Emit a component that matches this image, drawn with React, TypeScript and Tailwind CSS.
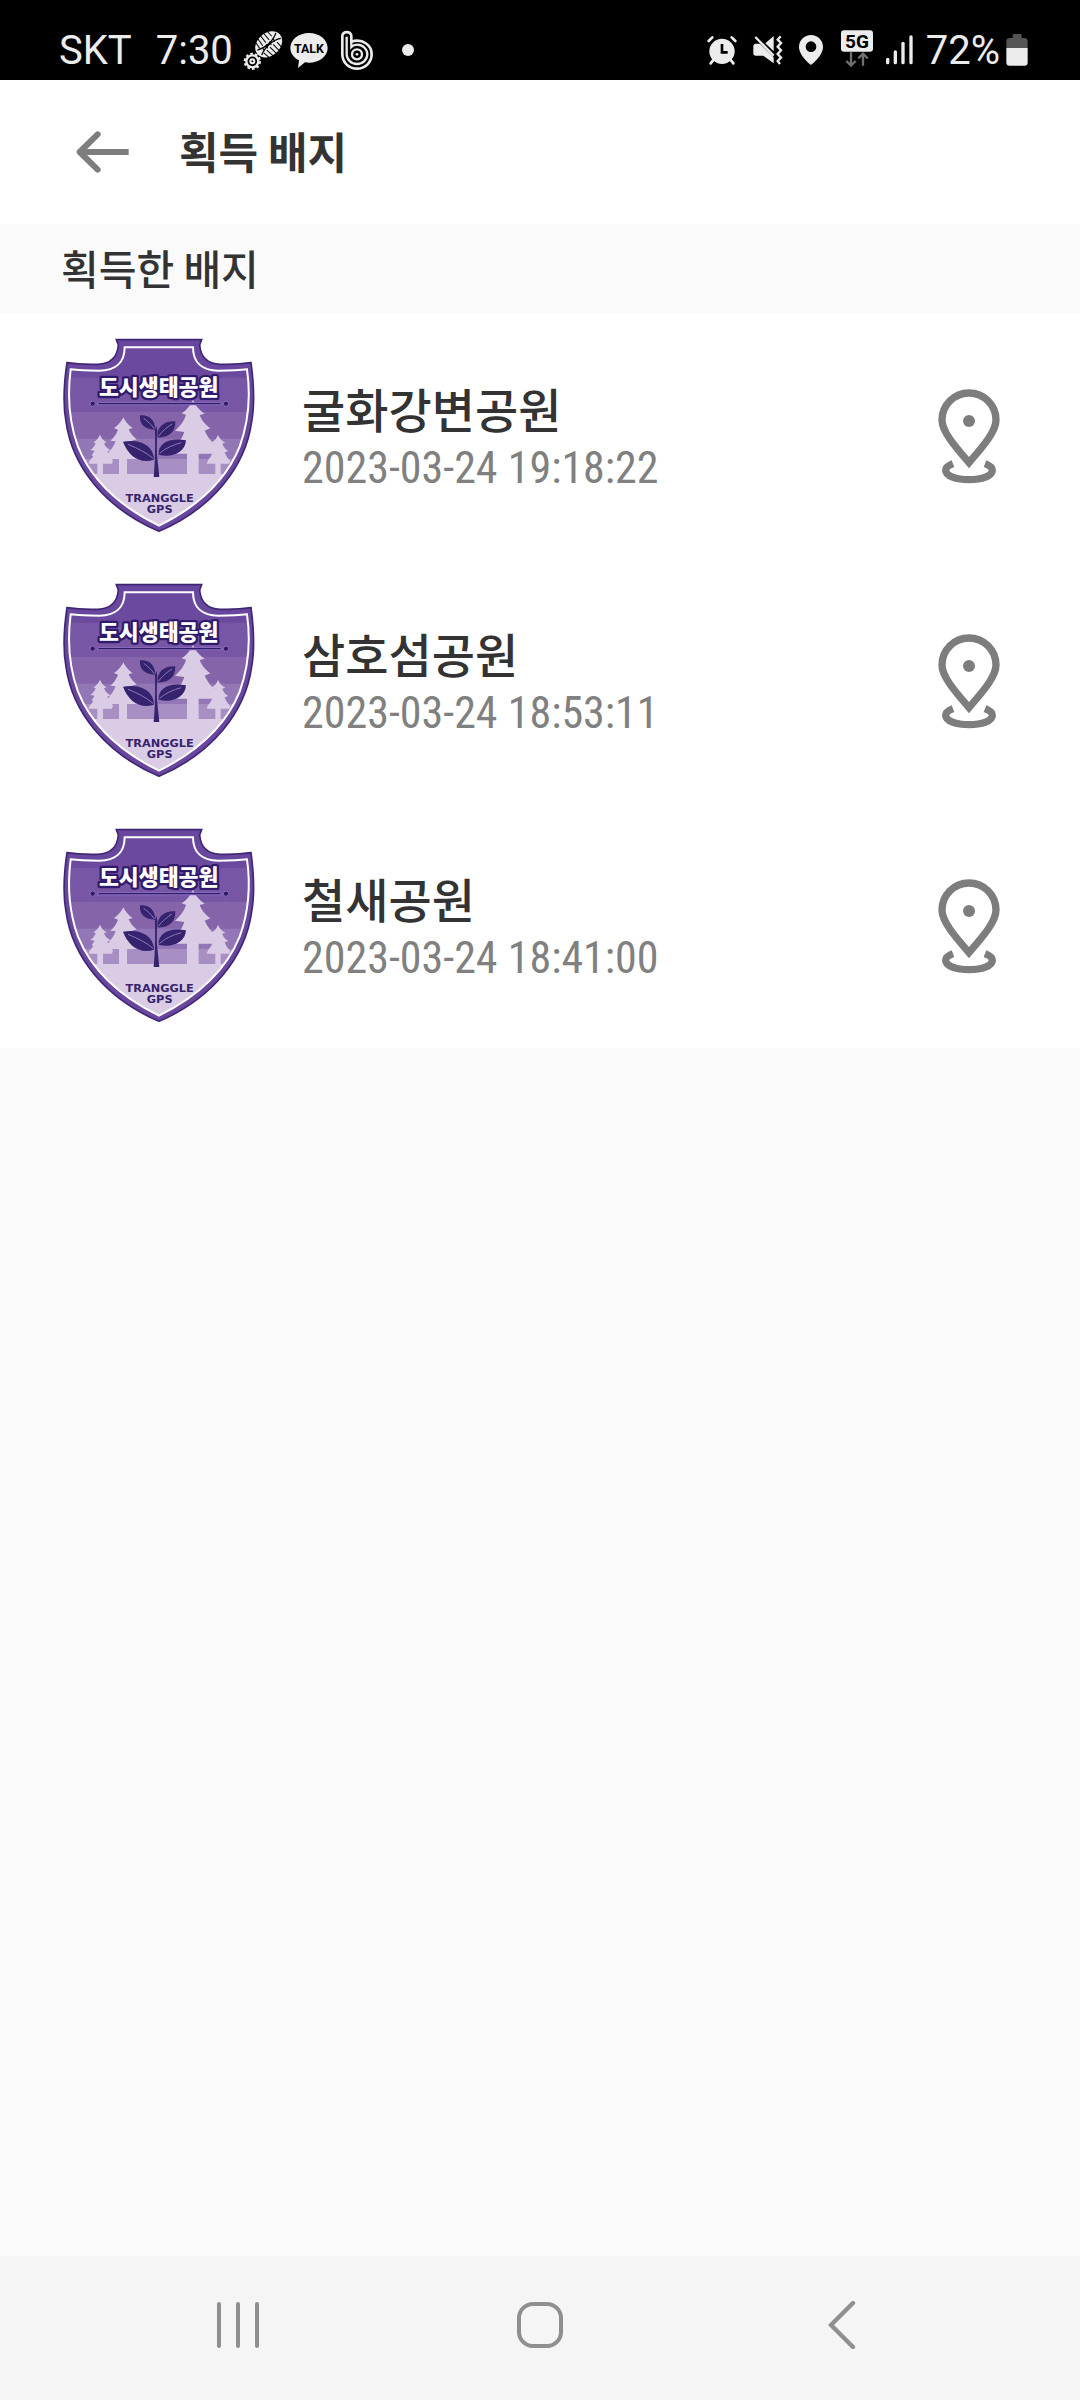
const badges = [
  { name: "굴화강변공원", date: "2023-03-24 19:18:22" },
  { name: "삼호섬공원", date: "2023-03-24 18:53:11" },
  { name: "철새공원", date: "2023-03-24 18:41:00" },
];

function StatusBar() {
  return (
    <div className="flex h-20 items-center justify-between bg-black pt-5 pr-[52px] pl-[59px] font-['Roboto',sans-serif] text-[40px] leading-none text-[#ececec]">
      <div className="flex items-center">
        <span className="pt-[2px]">SKT</span>
        <span className="ml-6 pt-[2px]">7:30</span>

        {/* shoe print + gear */}
        <svg className="ml-[10px] h-10 w-10" viewBox="0 0 120 120" fill="none">
          <g transform="rotate(-42 77 43)">
            <ellipse cx="77" cy="43" rx="45" ry="34" fill="#ececec" />
            <path d="M40 33c22 12 54 12 76-1M40 53c22-12 54-12 76 1" stroke="#000" strokeWidth="4" />
            <path d="M52 12l-3 22M64 8l-3 26M76 6l-2 28M88 8l-1 26M100 11l0 20M52 74l-3-22M64 78l-3-26M76 80l-2-28M88 78l-1-26M100 75l0-20" stroke="#000" strokeWidth="3" />
            <path d="M58 37l-5 12M72 38l-5 12M86 38l-5 12M100 37l-5 12" stroke="#000" strokeWidth="3" />
          </g>
          <circle cx="28" cy="94" r="18" stroke="#ececec" strokeWidth="7" />
          <circle cx="28" cy="94" r="23" stroke="#ececec" strokeWidth="6" strokeDasharray="8 6.5" />
          <circle cx="28" cy="94" r="6" stroke="#ececec" strokeWidth="6" />
        </svg>

        <svg className="ml-[7px] h-10 w-[38px]" viewBox="0 0 114 120">
          <path d="M57 9c31 0 56 20 56 45S88 98 57 98c-4 0-8 0-12-1L24 114l3-23C11 83 1 69 1 54 1 29 26 9 57 9z" fill="#ececec" />
          <text x="57" y="69" textAnchor="middle" fontSize="37" fontWeight="700" fill="#000">
            TALK
          </text>
        </svg>

        <svg className="ml-3 h-10 w-[34px]" viewBox="0 0 102 120" fill="none" stroke="#ececec" strokeWidth="8">
          <path d="M7 73V19C7 2 34 2 34 19v16c34-11 61 11 61 38 0 25-20 43-44 43S7 98 7 73z" />
          <path d="M20 20V73a31 29 0 1 0 31-29c-7 0-13 3-17 7V34" strokeWidth="7" />
          <circle cx="51" cy="73" r="15" strokeWidth="7" />
          <circle cx="51" cy="73" r="4" fill="#ececec" stroke="none" />
        </svg>

        <span className="ml-7 size-3 rounded-full bg-[#ececec]" />
      </div>

      <div className="flex items-center">
        {/* alarm */}
        <svg className="h-[30px] w-[30px]" viewBox="0 0 90 90" fill="none" stroke="#ececec" strokeLinecap="round">
          <circle cx="45" cy="49" r="38" fill="#ececec" stroke="none" />
          <path d="M5 18 16 7M85 18 74 7M18 76l-7 9M72 76l7 9" strokeWidth="8" />
          <path d="M45 27v25h17" stroke="#000" strokeWidth="8" strokeLinecap="butt" />
        </svg>
        {/* vibrate */}
        <svg className="ml-4 h-[30px] w-[30px]" viewBox="0 0 90 90">
          <path d="M8 26h13l41 41v18L31 62H8c-4 0-7-3-7-7V33c0-4 3-7 7-7z" fill="#ececec" />
          <path d="M37 25 62 3v46z" fill="#ececec" />
          <path d="M7 6 62 62" stroke="#ececec" strokeWidth="7" />
          <path d="M83 4l-9 10 10 10-10 11 10 11-10 11 10 11-10 10 7 9" fill="none" stroke="#ececec" strokeWidth="7" />
        </svg>
        {/* location */}
        <svg className="ml-4 h-[30px] w-6" viewBox="0 0 72 90" fill="#ececec" fillRule="evenodd">
          <path d="M36 0C16 0 0 16 0 36c0 27 36 54 36 54s36-27 36-54C72 16 56 0 36 0zm0 19a16 16 0 1 1 0 32 16 16 0 0 1 0-32z" />
        </svg>
        {/* 5G */}
        <svg className="ml-[18px] h-10 w-8" viewBox="0 0 96 120" fill="none">
          <rect y="1" width="96" height="64" rx="9" fill="#ececec" />
          <text x="48" y="53" textAnchor="middle" fontSize="57" fontWeight="700" fill="#000">
            5G
          </text>
          <path d="M30 67v38M16 93l14 14 14-14M66 107V71M52 85l14-14 14 14" stroke="#707070" strokeWidth="7" />
        </svg>
        {/* signal */}
        <svg className="ml-[13px] h-[30px] w-[27px]" viewBox="0 0 81 90" fill="#ececec">
          <rect y="68" width="10" height="20" rx="5" />
          <rect x="23" y="46" width="10" height="42" rx="5" />
          <rect x="46" y="20" width="10" height="68" rx="5" />
          <rect x="70" y="1" width="10" height="87" rx="5" />
        </svg>
        <span className="ml-[13px] pt-[2px]">72%</span>
        {/* battery */}
        <svg className="ml-[6px] h-8 w-[22px]" viewBox="0 0 66 96">
          <path d="M10 12h10V5c0-3 2-5 5-5h17c3 0 5 2 5 5v7h9c5 0 9 4 9 9v21H1V21c0-5 4-9 9-9z" fill="#555" />
          <path d="M1 42h64v44c0 5-4 9-9 9H10c-5 0-9-4-9-9z" fill="#ececec" />
        </svg>
      </div>
    </div>
  );
}

function BadgeShield() {
  return (
    <svg className="h-[195px] w-[194px] shrink-0" viewBox="36 39 582 585" aria-hidden="true">
      <defs>
        <clipPath id="shield-face">
          <path d="M224 67H429C429 112 456 137 505 137C535 137 562 137 591 133C602 210 598 285 569 365C526 472 438 547 327 602C215 547 127 472 84 365C55 285 52 210 62 133C91 137 118 137 148 137C197 137 224 112 224 67z" />
        </clipPath>
      </defs>
      <path
        d="M199 44H455L449 60C452 98 472 116 510 118C540 119 572 118 603 113C612 180 615 235 605 290C586 428 485 551 327 619C168 551 67 428 48 290C38 235 41 180 51 113C82 118 114 119 144 118C182 116 202 98 205 60z"
        fill="#6a479f"
        stroke="#3f2775"
        strokeWidth="5"
      />
      <g clipPath="url(#shield-face)">
        <rect x="40" y="60" width="580" height="100" fill="#6b499e" />
        <rect x="40" y="158" width="580" height="102" fill="#7757a5" />
        <rect x="40" y="260" width="580" height="82" fill="#8564aa" />
        <rect x="40" y="341" width="580" height="62" fill="#9376b5" />
        <rect x="40" y="402" width="580" height="46" fill="#a78fc4" />
        <rect x="40" y="447" width="580" height="170" fill="#dbcce6" />

        {/* trees */}
        <g fill="#dbcce6">
          <path d="M150 329C155 341 161 347 170 352L162 355C166 366 173 371 182 376L172 380C176 390 181 398 189 406L186 416H159V450H142V416H116C116 410 122 404 130 394L125 391L134 377L121 375C130 369 134 363 137 355L130 352C139 347 145 340 150 329z" />
          <path d="M220 277C228 293 236 301 248 309L236 313C242 327 250 335 260 343L246 347C252 360 260 370 270 380L266 402H231V450H207V402H169L173 386C184 374 192 362 197 349L181 347C191 339 199 327 204 314L192 309C204 301 212 293 220 277z" />
          <path d="M429 225C437 243 448 256 464 266L449 270C456 288 466 299 481 310L464 317C472 334 482 348 498 362L492 386H446V450H411V386H365L382 358C392 346 399 333 403 321L375 317C390 303 403 288 408 269L395 265C410 255 421 242 429 225z" />
          <path d="M504 329C509 341 515 347 526 353L517 356C520 366 526 373 535 378L524 382C528 394 534 402 541 408L538 416H512V450H496V416H470L474 406C480 398 486 389 489 381L476 378C484 373 490 366 493 356L484 353C493 348 500 341 504 329z" />
        </g>

        {/* sprout */}
        <g fill="#36236f">
          <path d="M311 456C315 412 316 376 315 315L319 302L322 318C321 344 320 362 321 390L328 456z" />
          <path d="M270 271C295 268 316 283 315 314C286 315 267 298 270 271z" />
          <path d="M376 289C377 320 357 339 323 337C320 305 343 287 376 289z" />
          <path d="M219 350C266 342 310 358 312 404C269 418 234 392 219 350z" />
          <path d="M408 346C406 382 367 400 326 389C323 353 361 336 408 346z" />
        </g>
        <path
          d="M281 280C293 289 305 299 313 312M366 297C350 307 336 319 325 334M234 358C263 370 290 383 310 401M394 353C370 359 347 369 329 385"
          fill="none"
          stroke="#8d76b5"
          strokeWidth="3"
        />
      </g>
      <path
        d="M224 67H429C429 112 456 137 505 137C535 137 562 137 591 133C602 210 598 285 569 365C526 472 438 547 327 602C215 547 127 472 84 365C55 285 52 210 62 133C91 137 118 137 148 137C197 137 224 112 224 67z"
        fill="none"
        stroke="#fff"
        strokeWidth="6"
      />

      {/* ribbon line */}
      <path d="M145 236H512" stroke="#8f70c0" strokeWidth="9" strokeLinecap="round" />
      <path d="M145 236H512" stroke="#2f1a6b" strokeWidth="4" />
      <g fill="#2f1a6b" stroke="#8f70c0" strokeWidth="3">
        <circle cx="128" cy="236" r="8" />
        <circle cx="528" cy="236" r="8" />
      </g>

      <text
        x="326"
        y="211"
        textAnchor="middle"
        fontSize="65"
        fontWeight="900"
        fill="#fff"
        stroke="#2f1a6b"
        strokeWidth="14"
        strokeLinejoin="round"
        paintOrder="stroke"
        className="font-['Noto_Sans_CJK_KR',sans-serif]"
      >
        도시생태공원
      </text>
      <g textAnchor="middle" fontSize="34" fontWeight="700" fill="#36236f" className="font-['DejaVu_Sans',sans-serif]">
        <text x="329" y="530">TRANGGLE</text>
        <text x="329" y="564">GPS</text>
      </g>
    </svg>
  );
}

function MapPin() {
  return (
    <svg className="h-[98px] w-16" viewBox="111 79 192 294" fill="none" stroke="#7d7d7d" strokeWidth="22">
      <path d="M207 306C165 257 126 213 126 178a81 81 0 0 1 162 0C288 213 249 257 207 306z" />
      <circle cx="207" cy="181" r="18" fill="#7d7d7d" stroke="none" />
      <path d="M159 309C146 314 137 321 137 329C137 346 168 357 207 357S277 346 277 329C277 321 268 314 255 309" />
    </svg>
  );
}

export default function App() {
  return (
    <div className="flex min-h-screen flex-col bg-[#fafafa] font-['Noto_Sans_CJK_KR',sans-serif] text-[#333]">
      <StatusBar />

      <header className="flex h-36 items-center bg-white pl-[75px]">
        <button type="button" aria-label="뒤로">
          <svg className="h-[42px] w-[54px]" viewBox="0 0 162 126" fill="none" stroke="#7d7d7d" strokeWidth="18">
            <path d="M68 10 14 63l54 53" strokeLinecap="round" strokeLinejoin="round" />
            <path d="M16 63h145" />
          </svg>
        </button>
        <h1 className="ml-[50px] pb-1 text-[43px] leading-none font-bold">획득 배지</h1>
      </header>

      <h2 className="flex h-[89px] items-center pb-[2px] pl-[61px] text-[41px] leading-none font-medium">획득한 배지</h2>

      <main className="flex-1">
        <ul className="bg-white">
          {badges.map((badge) => (
            <li key={badge.name} className="flex items-center py-[25px] pr-[79px] pl-[62px]">
              <BadgeShield />
              <div className="ml-[46px] flex-1 pt-2">
                <p className="text-[47px] leading-[56px] font-medium">{badge.name}</p>
                <p className="font-['Roboto_Condensed','Roboto',sans-serif] text-[44px] leading-[64px] text-[#808080]">
                  {badge.date}
                </p>
              </div>
              <button type="button" aria-label={`${badge.name} 지도`}>
                <MapPin />
              </button>
            </li>
          ))}
        </ul>
      </main>

      <nav className="grid h-36 grid-cols-3 place-items-center bg-[#f5f5f5] px-[87px] pb-[6px]">
        <button type="button" aria-label="최근 앱" className="flex gap-[15px]">
          <span className="h-[46px] w-1 rounded-full bg-[#8f8f8f]" />
          <span className="h-[46px] w-1 rounded-full bg-[#8f8f8f]" />
          <span className="h-[46px] w-1 rounded-full bg-[#8f8f8f]" />
        </button>
        <button type="button" aria-label="홈" className="size-[46px] rounded-2xl border-4 border-[#8f8f8f]" />
        <button type="button" aria-label="이전">
          <svg className="h-12 w-7" viewBox="0 0 84 144" fill="none" stroke="#8f8f8f" strokeWidth="13" strokeLinecap="round">
            <path d="M75 6 9 72l66 66" />
          </svg>
        </button>
      </nav>
    </div>
  );
}
